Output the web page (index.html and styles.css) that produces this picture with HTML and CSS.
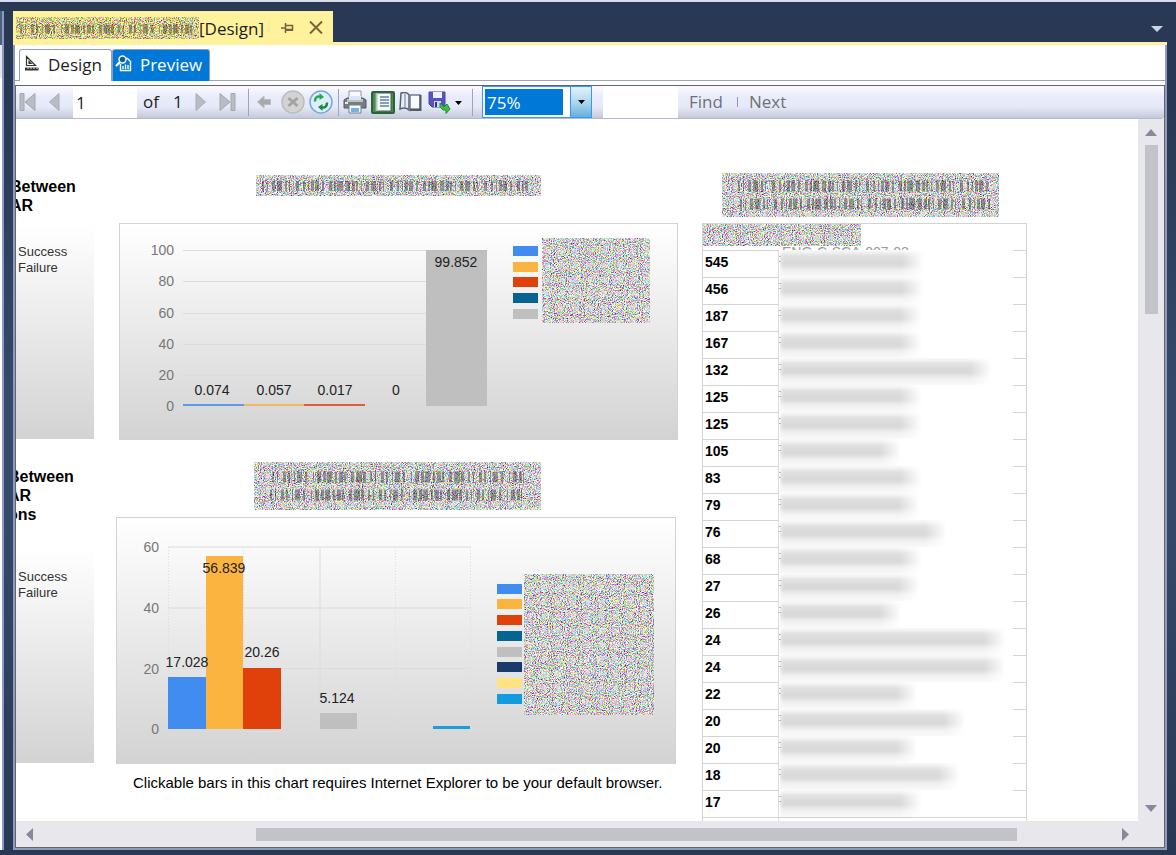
FILE: index.html
```html
<!DOCTYPE html>
<html lang="en">
<head>
<meta charset="utf-8">
<title>Report Designer</title>
<link rel="stylesheet" href="styles.css">
</head>
<body>
<svg class="defs" aria-hidden="true">
  <filter id="noise" x="0" y="0" width="100%" height="100%" color-interpolation-filters="sRGB">
    <feTurbulence type="fractalNoise" baseFrequency="0.93" numOctaves="2" seed="7"/>
    <feColorMatrix values="2.6 0 0 0 -0.46  0 2.6 0 0 -0.46  0 0 2.6 0 -0.46  0 0 0 0 1"/>
  </filter>
  <filter id="noise-yellow" x="0" y="0" width="100%" height="100%" color-interpolation-filters="sRGB">
    <feTurbulence type="fractalNoise" baseFrequency="0.93" numOctaves="2" seed="3"/>
    <feColorMatrix values="2.4 0 0 0 -0.32  0 2.4 0 0 -0.37  0 0 2.4 0 -0.65  0 0 0 0 1"/>
  </filter>
</svg>

<div class="ide">
  <aside class="neighbour"></aside>
  <main class="document">
    <div class="doc-tabs">
      <div class="doc-tab">
        <svg class="noise" width="183" height="22" aria-hidden="true"><rect width="183" height="22" filter="url(#noise-yellow)"/><path class="ink" d="M4 12H180" stroke-width="9" stroke-dasharray="2 3 1 5 3 2 2 4 1 2 5 3 2 6 1 3 4"/></svg>
        <span class="doc-name">[Design]</span>
        <button class="tab-btn pin" aria-label="Pin tab"><svg width="13" height="12" viewBox="0 0 13 12"><path d="M0 6H4M4.5 1V11M5 3.5H11.5V8.5M5 7.500H12" fill="none" stroke="#75633d" stroke-width="1.500"/><path d="M5 7H12V9H5z" fill="#75633d"/></svg></button>
        <button class="tab-btn" aria-label="Close tab"><svg width="14" height="13" viewBox="0 0 14 13"><path d="M1 0.500L13 12.500M13 0.500L1 12.500" stroke="#75633d" stroke-width="2"/></svg></button>
      </div>
      <button class="tab-btn tabs-menu" aria-label="Open documents"><svg width="12" height="6"><path d="M0 0H12L6 6z" fill="#ced4dd"/></svg></button>
    </div>

    <div class="window">
      <nav class="view-tabs">
        <button class="view-tab"><svg width="14" height="16" viewBox="0 0 14 16"><path d="M1.500 1.500V10.500H10.500z M4 6.500V8.500H6z" fill="none" stroke="#333" stroke-width="1.200"/><path d="M0 12.500H13.500V15.500H0z" fill="#333"/><path d="M3 12.500V14M6 12.500V14M9 12.500V14M12 12.500V14" stroke="#fff"/></svg>Design</button>
        <button class="view-tab active"><svg width="17" height="17" viewBox="0 0 17 17"><path d="M9 3.500H12.500L15.500 6.500V15.500H5.500V9" fill="#0078d7" stroke="#fff" stroke-width="1.400"/><circle cx="7.500" cy="4.500" r="3.500" fill="#1b5c96" stroke="#fff" stroke-width="1.400"/><path d="M5 7L1 11" stroke="#fff" stroke-width="2.400"/><path d="M8 14V11M10.500 14V9.500M13 14V10" stroke="#fff" stroke-width="1.400"/></svg>Preview</button>
      </nav>

      <section class="viewer">
        <div class="toolbar">
          <button class="tool first" aria-label="First page"><svg width="17" height="18" viewBox="0 0 17 18"><path d="M1 0.500H5V17.500H1z M16 0.500V17.500L6 9z" fill="#b9bcc3" stroke="#a4a8b0"/></svg></button>
          <button class="tool prev" aria-label="Previous page"><svg width="11" height="18" viewBox="0 0 11 18"><path d="M10 0.500V17.500L0.500 9z" fill="#b9bcc3" stroke="#a9adb5"/></svg></button>
          <input class="page-no" aria-label="Current page" value="1">
          <span class="of">of</span><span class="total">1</span>
          <button class="tool next" aria-label="Next page"><svg width="11" height="18" viewBox="0 0 11 18"><path d="M1 0.500V17.500L10.500 9z" fill="#b9bcc3" stroke="#a9adb5"/></svg></button>
          <button class="tool last" aria-label="Last page"><svg width="17" height="18" viewBox="0 0 17 18"><path d="M12 0.500H16V17.500H12z M1 0.500V17.500L11 9z" fill="#b9bcc3" stroke="#a4a8b0"/></svg></button>
          <span class="sep"></span>
          <button class="tool back" aria-label="Back"><svg width="14" height="14" viewBox="0 0 14 14"><path d="M0.500 7L7 1V4.500H13.500V9.500H7V13z" fill="#a9a9aa" stroke="#bcbcc0"/></svg></button>
          <button class="tool stop" aria-label="Stop"><svg width="24" height="24" viewBox="0 0 24 24"><circle cx="12" cy="12" r="11" fill="#d3d3d4" stroke="#bdbdbe" stroke-width="1.500"/><path d="M7.500 8L16.500 16M16.500 8L7.500 16" stroke="#a3a3a3" stroke-width="3"/></svg></button>
          <button class="tool refresh" aria-label="Refresh"><svg width="24" height="24" viewBox="0 0 24 24"><circle cx="12" cy="12" r="11" fill="#dceefb" stroke="#7ba7d6" stroke-width="1.500"/><path d="M6 11.500C6 7.500 8 6 11 6.500" fill="none" stroke="#2aa64a" stroke-width="2.500"/><path d="M10.500 3L15 7L10.500 10z" fill="#2aa64a"/><path d="M18 12.500C18 16.500 16 18 13 17.500" fill="none" stroke="#19893a" stroke-width="2.500"/><path d="M13.500 14L9 17L13.500 21z" fill="#19893a"/></svg></button>
          <span class="sep tight"></span>
          <button class="tool print" aria-label="Print"><svg width="24" height="24" viewBox="0 0 24 24"><path d="M6 1H18V10H6z" fill="#f7fafd" stroke="#8b97a5"/><path d="M1 10L4 8H20L23 10V18H1z" fill="#777c84" stroke="#555b63"/><path d="M4 9H20V12H4z" fill="#bcc0c6"/><path d="M6 6H18V10H6z" fill="#dce6f1"/><path d="M6 15H18V23H6z" fill="#f5f9fc" stroke="#718196"/><path d="M8 18H16V22H8z" fill="#77b1df"/><path d="M2 12H5V14H2z" fill="#e8eaec"/></svg></button>
          <button class="tool layout" aria-label="Print layout" aria-pressed="true"><svg width="24" height="23" viewBox="0 0 24 23"><rect x="1" y="1" width="22" height="21" rx="1" fill="#4f8659" stroke="#2c6238" stroke-width="2"/><path d="M5 2H20V20H5z" fill="#f7f9fc" stroke="#386b43"/><path d="M9 6H18M9 9H18M9 12H18M9 15H18" stroke="#6180a9" stroke-width="1.400"/><path d="M5.500 2V20" stroke="#aacaae" stroke-width="2"/></svg></button>
          <button class="tool setup" aria-label="Page setup"><svg width="23" height="20" viewBox="0 0 23 20"><path d="M2 1C6 0 9 1 10 3V18C8 16 5 15.500 1 17z" fill="#e9eef6" stroke="#596273" stroke-width="1.500"/><path d="M6 1V15" stroke="#aab7c9" stroke-width="2"/><path d="M11 3H21V17H11z" fill="#f8fafd" stroke="#747b87" stroke-width="1.500"/><path d="M21.500 3V18H11" fill="none" stroke="#555b65" stroke-width="2"/></svg></button>
          <button class="tool export" aria-label="Export"><svg width="34" height="24" viewBox="0 0 34 24"><path d="M1 2H17V17H4L1 14z" fill="#5654c2" stroke="#4846ae"/><path d="M5 2H14V8H5z" fill="#f0f3ff"/><path d="M6 11H13V17H6z" fill="#d5d9ec"/><path d="M7 12H9V17H7z" fill="#34368f"/><path d="M12 13L16 17L19 14L22 19L18 23.500V20H15L12 17z" fill="#3ac243" stroke="#238b31"/><path d="M27 11H34L30.500 15z" fill="#000"/></svg></button>
          <span class="sep wide"></span>
          <label class="zoom"><select aria-label="Zoom"><option>75%</option></select><svg width="7" height="4" aria-hidden="true"><path d="M0 0H7L3.500 4z"/></svg></label>
          <input class="find-text" aria-label="Find text">
          <button class="link-btn">Find</button>
          <span class="tick"></span>
          <button class="link-btn">Next</button>
        </div>

        <div class="viewport">
          <div class="report">
            <div class="col pies">
              <h2 class="cut-title">Between<br>AR</h2>
              <div class="pie-box"><span>Success</span><span>Failure</span></div>
              <h2 class="cut-title second">Between<br>AR<br>ons</h2>
              <div class="pie-box second"><span>Success</span><span>Failure</span></div>
            </div>

            <div class="col charts">
              <svg class="noise title-one" width="285" height="21" aria-hidden="true"><rect width="285" height="21" filter="url(#noise)"/><path class="ink" d="M6 11H272" stroke-width="10" stroke-dasharray="2 3 1 4 3 2 5 3 2 2 1 6 3 4 2 3 1"/></svg>
              <svg class="chart one" width="559" height="217" viewBox="1 1 557 215" role="img" aria-label="Percentage chart">
                <g class="grid"><path d="M64 27.500H368M64 58.500H368M64 90.500H368M64 121.500H368M64 152.500H368"/></g>
                <g class="axis"><text x="55" y="32">100</text><text x="55" y="63">80</text><text x="55" y="95">60</text><text x="55" y="126">40</text><text x="55" y="157">20</text><text x="55" y="188">0</text></g>
                <path d="M64 182H125" stroke="#5f99ea" stroke-width="2"/><path d="M125 182H185" stroke="#f0b860" stroke-width="2"/><path d="M185 182H246" stroke="#de6038" stroke-width="2"/>
                <rect x="307" y="27" width="61" height="156" fill="#bfbfbf"/>
                <g class="value"><text x="93" y="172">0.074</text><text x="155" y="172">0.057</text><text x="216" y="172">0.017</text><text x="277" y="172">0</text><text x="337" y="44">99.852</text></g>
                <g class="legend"><rect x="394" y="23" width="25" height="10" fill="#418cf0"/><rect x="394" y="39" width="25" height="10" fill="#fcb441"/><rect x="394" y="54" width="25" height="10" fill="#e0400a"/><rect x="394" y="70" width="25" height="10" fill="#056492"/><rect x="394" y="86" width="25" height="10" fill="#bfbfbf"/></g>
                <rect x="423" y="15" width="108" height="85" filter="url(#noise)"/>
              </svg>
              <svg class="noise title-two" width="287" height="48" aria-hidden="true"><rect width="287" height="48" filter="url(#noise)"/><path class="ink" d="M18 15H270M16 33H268" stroke-width="11" stroke-dasharray="2 3 1 5 3 2 2 4 1 2 5 3 2 6 1 3 4"/></svg>
              <svg class="chart" width="560" height="247" viewBox="1 1 558 245" role="img" aria-label="Breakdown chart">
                <g class="grid"><path d="M52 30H355M52 91H355M52 151.500H355M204 30V212"/><path d="M52.500 30V212M127.500 30V212M279.500 30V212M354.500 30V212" stroke-dasharray="1 2"/></g>
                <g class="axis"><text x="43" y="35">60</text><text x="43" y="96">40</text><text x="43" y="157">20</text><text x="43" y="217">0</text></g>
                <rect x="52" y="160" width="38" height="52" fill="#418cf0"/><rect x="90" y="39" width="37" height="173" fill="#fcb441"/><rect x="127" y="151" width="38" height="61" fill="#e0400a"/><rect x="204" y="196" width="37" height="16" fill="#bfbfbf"/><rect x="317" y="209" width="37" height="3" fill="#1a9ddd"/>
                <g class="value"><text x="71" y="150">17.028</text><text x="108" y="56">56.839</text><text x="146" y="140">20.26</text><text x="221" y="186">5.124</text></g>
                <g class="legend"><rect x="381" y="67" width="25" height="10" fill="#418cf0"/><rect x="381" y="82" width="25" height="10" fill="#fcb441"/><rect x="381" y="98" width="25" height="10" fill="#e0400a"/><rect x="381" y="114" width="25" height="10" fill="#056492"/><rect x="381" y="130" width="25" height="10" fill="#bfbfbf"/><rect x="381" y="145" width="25" height="10" fill="#1a3b69"/><rect x="381" y="161" width="25" height="10" fill="#ffe382"/><rect x="381" y="177" width="25" height="10" fill="#129cdd"/></g>
                <rect x="408" y="57" width="130" height="141" filter="url(#noise)"/>
              </svg>
              <p class="note">Clickable bars in this chart requires Internet Explorer to be your default browser.</p>
            </div>

            <div class="col counts">
              <svg class="noise title-three" width="277" height="44" aria-hidden="true"><rect width="277" height="44" filter="url(#noise)"/><path class="ink" d="M16 13H270M18 31H272" stroke-width="11" stroke-dasharray="2 3 1 4 3 2 5 3 2 2 1 6 3 4 2 3 1"/></svg>
              <table>
                <colgroup><col class="count-col"><col></colgroup>
                <thead><tr><th colspan="2"><svg class="noise" width="158" height="22" aria-hidden="true"><rect width="158" height="22" filter="url(#noise)"/></svg><span class="peek">ENG-C-SCA-007-02</span></th></tr></thead>
                <tbody>
                  <tr><td>545</td><td><i style="width:144px"></i></td></tr>
                  <tr><td>456</td><td><i style="width:144px"></i></td></tr>
                  <tr><td>187</td><td><i style="width:142px"></i></td></tr>
                  <tr><td>167</td><td><i style="width:142px"></i></td></tr>
                  <tr><td>132</td><td><i style="width:212px"></i></td></tr>
                  <tr><td>125</td><td><i style="width:142px"></i></td></tr>
                  <tr><td>125</td><td><i style="width:142px"></i></td></tr>
                  <tr><td>105</td><td><i style="width:122px"></i></td></tr>
                  <tr><td>83</td><td><i style="width:142px"></i></td></tr>
                  <tr><td>79</td><td><i style="width:140px"></i></td></tr>
                  <tr><td>76</td><td><i style="width:167px"></i></td></tr>
                  <tr><td>68</td><td><i style="width:142px"></i></td></tr>
                  <tr><td>27</td><td><i style="width:140px"></i></td></tr>
                  <tr><td>26</td><td><i style="width:122px"></i></td></tr>
                  <tr><td>24</td><td><i style="width:226px"></i></td></tr>
                  <tr><td>24</td><td><i style="width:226px"></i></td></tr>
                  <tr><td>22</td><td><i style="width:138px"></i></td></tr>
                  <tr><td>20</td><td><i style="width:186px"></i></td></tr>
                  <tr><td>20</td><td><i style="width:138px"></i></td></tr>
                  <tr><td>18</td><td><i style="width:180px"></i></td></tr>
                  <tr><td>17</td><td><i style="width:142px"></i></td></tr>
                  <tr><td></td><td></td></tr>
                </tbody>
              </table>
            </div>
          </div>

          <div class="scroll vertical">
            <button aria-label="Scroll up"><svg width="12" height="7"><path d="M0 7L6 0L12 7z"/></svg></button>
            <div class="track"><div class="thumb"></div></div>
            <button aria-label="Scroll down"><svg width="12" height="7"><path d="M0 0H12L6 7z"/></svg></button>
          </div>
        </div>
        <div class="scroll horizontal">
          <button aria-label="Scroll left"><svg width="7" height="13"><path d="M7 0V13L0 6.500z"/></svg></button>
          <div class="track"><div class="thumb"></div></div>
          <button aria-label="Scroll right"><svg width="7" height="13"><path d="M0 0V13L7 6.500z"/></svg></button>
        </div>
      </section>
    </div>
  </main>
</div>
</body>
</html>
```

FILE: styles.css
```css
* { box-sizing: border-box; }
body {
  margin: 0;
  font: 17px/24px "Open Sans", sans-serif;
  color: #1e1e1e;
}
button, input, select { font: inherit; color: inherit; border: 0; margin: 0; padding: 0; background: none; }
button { display: flex; align-items: center; cursor: pointer; }
svg { display: block; flex: none; }
.defs { position: absolute; width: 0; height: 0; }
.ink { fill: none; stroke: #111; opacity: 0.35; }

.ide {
  display: flex;
  gap: 9px;
  height: 100vh;
  padding: 9px 9px 5px 0;
  border-top: 2px solid #d6dced;
  background: linear-gradient(#293955, #293955 12%, #35496a 45%, #35496a 60%, #293955);
}
.neighbour {
  flex: none;
  width: 4px;
  border-right: 2px solid #8e9bbc;
  background: linear-gradient(#4d6082 34px, #e6e7ed 34px, #e6e7ed 67px, #fff 67px);
}
.document { flex: 1; min-width: 0; display: flex; flex-direction: column; }

.doc-tabs {
  display: flex;
  justify-content: space-between;
  align-items: stretch;
  height: 34px;
  border-bottom: 3px solid #fff29d;
}
.doc-tab { display: flex; align-items: center; padding: 2px 10px 0 3px; background: #fff29d; }
.doc-name { padding: 2px 0 0; width: 82px; }
.pin { margin-right: 15px; }
.tabs-menu { padding: 5px 4px 0 0; }

.window {
  flex: 1;
  min-height: 0;
  display: flex;
  flex-direction: column;
  border: solid #8e9bbc;
  border-width: 0 2px 2px;
  background: #fff;
}
.view-tabs {
  display: flex;
  height: 36px;
  margin-bottom: 4px;
  padding: 4px 4px 0;
  border-bottom: 1px solid #9ba7b7;
}
.view-tab {
  gap: 9px;
  height: 32px;
  padding: 0 9px 2px 5px;
  border: 1px solid #8e9bbc;
  border-bottom: 0;
  border-radius: 3px 3px 0 0;
  background: #fff;
}
.view-tab svg { margin-bottom: 3px; }
.view-tab.active { gap: 8px; padding-left: 2px; padding-right: 7px; background: #0078d7; color: #fff; }

.viewer {
  flex: 1;
  min-height: 0;
  display: flex;
  flex-direction: column;
  border: 1px solid #64646a;
}
.toolbar {
  display: flex;
  align-items: center;
  flex: none;
  height: 33px;
  padding-left: 3px;
  border-bottom: 1px solid #b3bbcc;
  border-radius: 0 0 3px 0;
  background: linear-gradient(#fbfbff, #e8ebfa 35%, #e6e9f8 65%, #c4c9da);
}
.prev { margin: 0 13px; }
.page-no { width: 64px; height: 31px; padding-left: 3px; background: #fff; }
.of { width: 36px; padding-left: 6px; }
.total { width: 22px; }
.next { margin-right: 13px; }
.sep { width: 1px; height: 27px; margin: 0 8px 0 12px; background: #9ea5ba; }
.sep.tight { margin: 0 4px 0 5px; }
.sep.wide { margin: 0 9px 0 10px; }
.back { margin-right: 10px; }
.stop { margin-right: 4px; }
.print, .layout { margin-right: 4px; }
.setup { margin-right: 6px; }
.zoom { display: block; position: relative; width: 110px; height: 32px; margin-right: 11px; }
.zoom select {
  appearance: none;
  width: 100%;
  height: 100%;
  padding: 2px 0 0 4px;
  border: 1px solid #3399ff;
  border-radius: 0;
  color: #fff;
  background:
    linear-gradient(#0078d7, #0078d7) 2px 2px / 78px 26px no-repeat,
    linear-gradient(#3399ff, #3399ff) right 20px top / 1px 100% no-repeat,
    linear-gradient(#e4f3fb, #a8d5ec 55%, #66afd8) right top / 20px 100% no-repeat,
    #fff;
}
.zoom svg { position: absolute; right: 7px; top: 14px; pointer-events: none; }
.find-text { width: 75px; height: 32px; margin-right: 11px; background: #fff; }
.link-btn { color: #707078; }
.tick { width: 1px; height: 10px; margin: 0 11px 0 14px; background: #8e9bbc; }

.viewport { flex: 1; min-height: 0; display: flex; }
.report {
  flex: 1;
  min-width: 0;
  display: flex;
  overflow: hidden;
  font-family: "Liberation Sans", Arial, sans-serif;
  color: #000;
}
.col { flex: none; }
.pies { width: 78px; margin-right: 22px; padding-top: 58px; }
.cut-title { margin: 0 0 9px -6px; font-size: 16px; line-height: 19px; }
.cut-title.second { margin: 28px 0 24px -8px; }
.pie-box {
  display: flex;
  flex-direction: column;
  height: 215px;
  padding: 20px 0 0 2px;
  font-size: 13px;
  line-height: 16px;
  color: #333;
  background: linear-gradient(#fff, #d3d3d3);
}
.pie-box.second { padding-top: 21px; }
.charts { width: 562px; margin-right: 24px; padding-top: 56px; }
.title-one { margin: 0 0 27px 140px; }
.title-two { margin: 22px 0 7px 138px; }
.chart { border: 1px solid #d3d3d3; background: linear-gradient(#fff, #d3d3d3); }
.chart.one { margin-left: 3px; }
.chart text { font-size: 14px; }
.axis { fill: #777; text-anchor: end; }
.value { fill: #222; text-anchor: middle; }
.grid { fill: none; stroke: #dcdcdc; }
.note { margin: 9px 0 0 17px; font-size: 15px; line-height: 20px; white-space: nowrap; }

.counts { width: 325px; padding-top: 54px; }
.title-three { margin: 0 0 6px 20px; }
table { width: 100%; border-collapse: separate; border-spacing: 0; table-layout: fixed; border-left: 1px solid #d3d3d3; border-top: 1px solid #d3d3d3; }
.count-col { width: 76px; }
th { height: 26px; padding: 0; vertical-align: top; border-right: 1px solid #d3d3d3; }
.peek {
  display: block;
  height: 4px;
  margin: 0 0 0 79px;
  overflow: hidden;
  font-size: 14px;
  font-weight: 400;
  line-height: 12px;
  text-align: left;
  color: #999;
}
td { height: 27px; padding: 0; vertical-align: top; }
td:first-child {
  padding: 1px 0 0 2px;
  font-size: 14px;
  font-weight: 700;
  line-height: 20px;
  border-top: 1px solid #d3d3d3;
  border-right: 1px solid #dcdcdc;
}
td:last-child {
  border-right: 1px solid #d3d3d3;
  background:
    linear-gradient(#d3d3d3, #d3d3d3) right top / 13px 1px no-repeat,
    linear-gradient(#aaa, #aaa) left 6px / 2px 1px no-repeat,
    linear-gradient(#aaa, #aaa) left 11px / 2px 1px no-repeat;
}
tr:last-child td:last-child { border-top: 1px solid #d3d3d3; background: none; }
td i {
  display: block;
  height: 27px;
  margin-left: 1px;
  filter: blur(2px);
  background: linear-gradient(#f4f4f4 2px, #ececec 4px, #d6d6d6 7px, #e2e2e2 10px, #d0d0d0 14px, #e8e8e8 18px, #f4f4f4 21px, #f4f4f4);
  mask-image: linear-gradient(to left, transparent, #000 22px);
}

.scroll { display: flex; flex: none; align-items: center; background: #e8e8ec; }
.scroll button { flex: none; justify-content: center; }
.scroll path { fill: #868999; }
.track { flex: 1; }
.thumb { background: #c2c3c9; }
.vertical { flex-direction: column; width: 26px; padding: 10px 0 9px; }
.vertical button { height: 7px; }
.vertical .track { width: 13px; padding: 9px 0; display: flex; flex-direction: column; }
.vertical .thumb { height: 26%; }
.horizontal { height: 26px; padding: 0 35px 0 10px; }
.horizontal .track { height: 13px; margin: 0 8px; }
.horizontal .thumb { width: 71%; height: 100%; margin-left: 20%; }
```
